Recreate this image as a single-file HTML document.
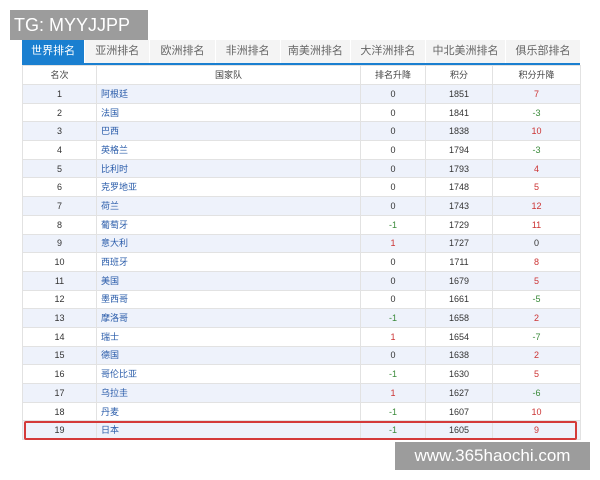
<!DOCTYPE html>
<html><head><meta charset="utf-8"><style>
body{margin:0;width:600px;height:480px;background:#fff;font-family:"Liberation Sans","Noto Sans CJK SC",sans-serif;position:relative;overflow:hidden}
.tg{position:absolute;left:10px;top:10px;width:138px;height:30px;background:#9c9c9c;color:#fff;font-size:18px;line-height:30px;padding-left:4px;box-sizing:border-box}
.tabs{position:absolute;left:22px;top:40px;width:558px;height:25px;border-bottom:2px solid #1a7fd0;box-sizing:border-box;display:flex;background:#f4f4f4}
.tabs div{font-size:11px;color:#666;text-align:center;line-height:23px;border-right:1px solid #fff}
.tabs .on{background:#1a7fd0;color:#fff}
table{position:absolute;left:22px;top:65px;width:558px;border-collapse:collapse;font-size:9px;line-height:12px;table-layout:fixed}
td{height:18.7px;padding:0;border:1px solid #e2e2e2;text-align:center;color:#333;box-sizing:border-box;vertical-align:middle}
tr:nth-child(even) td{background:#eef2fb}
tr.h td{background:#fff;height:19px;color:#444}
td.c{text-align:left;padding-left:4px;color:#2a5caa}
.r{color:#c33}.g{color:#3a8a3a}
.hl{position:absolute;left:24px;top:421px;width:553px;height:19px;border:2px solid #d43a3a;box-sizing:border-box;border-radius:2px}
.wm{position:absolute;left:395px;top:442px;width:195px;height:28px;background:#9c9c9c;color:#fff;font-size:17px;line-height:28px;text-align:center}
</style></head><body>
<div class="tg">TG: MYYJJPP</div>
<div class="tabs">
<div class="on" style="width:63px">世界排名</div><div style="width:65px">亚洲排名</div><div style="width:65px">欧洲排名</div><div style="width:65px">非洲排名</div><div style="width:70px">南美洲排名</div><div style="width:75px">大洋洲排名</div><div style="width:80px">中北美洲排名</div><div style="width:75px;border:0">俱乐部排名</div>
</div>
<table>
<colgroup><col style="width:74px"><col style="width:264px"><col style="width:65px"><col style="width:67px"><col style="width:88px"></colgroup>
<tr class="h"><td>名次</td><td>国家队</td><td>排名升降</td><td>积分</td><td>积分升降</td></tr>
<tr><td>1</td><td class="c">阿根廷</td><td>0</td><td>1851</td><td class="r">7</td></tr>
<tr><td>2</td><td class="c">法国</td><td>0</td><td>1841</td><td class="g">-3</td></tr>
<tr><td>3</td><td class="c">巴西</td><td>0</td><td>1838</td><td class="r">10</td></tr>
<tr><td>4</td><td class="c">英格兰</td><td>0</td><td>1794</td><td class="g">-3</td></tr>
<tr><td>5</td><td class="c">比利时</td><td>0</td><td>1793</td><td class="r">4</td></tr>
<tr><td>6</td><td class="c">克罗地亚</td><td>0</td><td>1748</td><td class="r">5</td></tr>
<tr><td>7</td><td class="c">荷兰</td><td>0</td><td>1743</td><td class="r">12</td></tr>
<tr><td>8</td><td class="c">葡萄牙</td><td class="g">-1</td><td>1729</td><td class="r">11</td></tr>
<tr><td>9</td><td class="c">意大利</td><td class="r">1</td><td>1727</td><td>0</td></tr>
<tr><td>10</td><td class="c">西班牙</td><td>0</td><td>1711</td><td class="r">8</td></tr>
<tr><td>11</td><td class="c">美国</td><td>0</td><td>1679</td><td class="r">5</td></tr>
<tr><td>12</td><td class="c">墨西哥</td><td>0</td><td>1661</td><td class="g">-5</td></tr>
<tr><td>13</td><td class="c">摩洛哥</td><td class="g">-1</td><td>1658</td><td class="r">2</td></tr>
<tr><td>14</td><td class="c">瑞士</td><td class="r">1</td><td>1654</td><td class="g">-7</td></tr>
<tr><td>15</td><td class="c">德国</td><td>0</td><td>1638</td><td class="r">2</td></tr>
<tr><td>16</td><td class="c">哥伦比亚</td><td class="g">-1</td><td>1630</td><td class="r">5</td></tr>
<tr><td>17</td><td class="c">乌拉圭</td><td class="r">1</td><td>1627</td><td class="g">-6</td></tr>
<tr><td>18</td><td class="c">丹麦</td><td class="g">-1</td><td>1607</td><td class="r">10</td></tr>
<tr><td>19</td><td class="c">日本</td><td class="g">-1</td><td>1605</td><td class="r">9</td></tr>
</table>
<div class="hl"></div>
<div class="wm">www.365haochi.com</div>
</body></html>
